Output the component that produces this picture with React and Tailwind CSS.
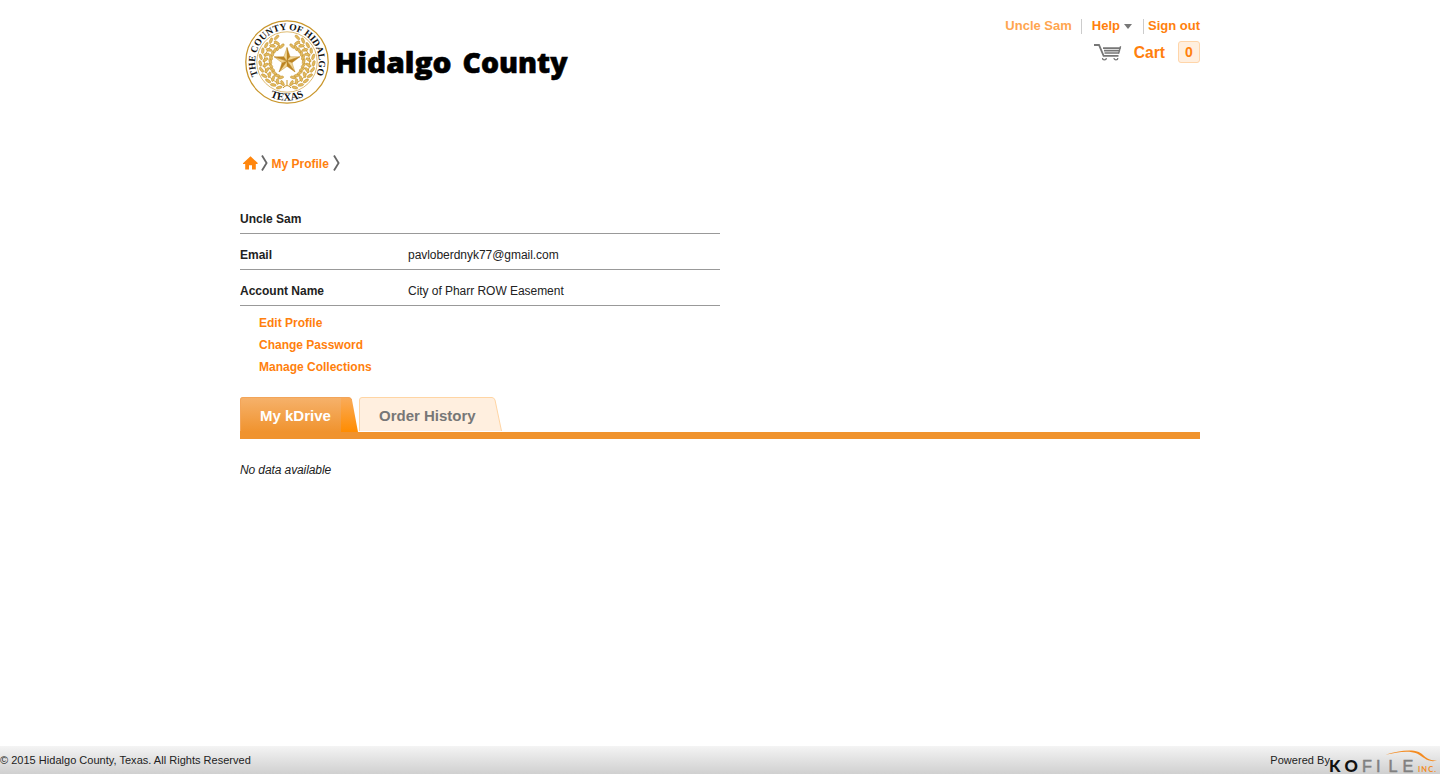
import React from "react";

const leaves = [];
for (let i = 0; i < 11; i++) {
  const a = 102 + i * 14;
  [[23, 50], [28, -30], [18, -34]].forEach(([r, tilt], j) => {
    leaves.push({ a: a + j * 5, r, tilt: tilt + (i % 3) * 9 });
    leaves.push({ a: 180 - a - j * 5, r, tilt: -tilt - (i % 3) * 9 });
  });
}

function star(cx, cy, R, r) {
  const pts = [];
  for (let i = 0; i < 10; i++) {
    const q = i % 2 ? r : R;
    const t = (-90 + i * 36) * (Math.PI / 180);
    pts.push([cx + q * Math.cos(t), cy + q * Math.sin(t)]);
  }
  return pts;
}

function Seal() {
  const pts = star(42, 41, 13.5, 5.3);
  return (
    <svg width="86" height="86" viewBox="-1 -1 86 86" className="shrink-0 overflow-visible">
      <defs>
        <path id="top" d="M 13.1 55.4 A 31.9 31.9 0 1 1 70.9 55.4" />
        <path id="bottom" d="M 14 68.5 A 38.6 38.6 0 0 0 70 68.5" />
      </defs>
      <circle cx="42" cy="42" r="41.2" fill="#fff" stroke="#c9962b" strokeWidth="1.3" />
      <circle cx="42" cy="42" r="30.2" fill="none" stroke="#d6aa4e" strokeWidth="0.8" />
      <g fill="none" stroke="#d0a03a" strokeWidth="1">
        <path d="M38 64.5 A 22.5 22.5 0 0 1 30 23 M46 64.5 A 22.5 22.5 0 0 0 54 23" />
      </g>
      <g fill="#e2bb62" stroke="#c08a20" strokeWidth="0.5">
        {leaves.map((l, i) => {
          const t = (l.a * Math.PI) / 180;
          return (
            <ellipse
              key={i}
              rx="3"
              ry="1.3"
              transform={`translate(${42 + (l.r - 1.3) * Math.cos(t)} ${42 + (l.r - 1.3) * Math.sin(t)}) rotate(${l.a + 90 + l.tilt})`}
            />
          );
        })}
      </g>
      <path d="M38 68 Q42 63 46 68 M42 65 V60" fill="none" stroke="#c9962b" />
      {pts.map((p, i) => {
        const n = pts[(i + 1) % 10];
        return (
          <polygon
            key={i}
            points={`42,41 ${p[0]},${p[1]} ${n[0]},${n[1]}`}
            fill={i % 2 ? "#f3d795" : "#bd8420"}
            stroke="#b98324"
            strokeWidth="0.4"
          />
        );
      })}
      <g fontFamily="Liberation Serif, serif" fontWeight="bold" fill="#111">
        <text fontSize="9.6">
          <textPath href="#top" textLength="127">THE COUNTY OF HIDALGO</textPath>
        </text>
        <text fontSize="10.5" textAnchor="middle">
          <textPath href="#bottom" startOffset="50%">TEXAS</textPath>
        </text>
      </g>
    </svg>
  );
}

function Chevron() {
  return (
    <svg width="7" height="16" viewBox="0 0 7 16" fill="none" stroke="#666" strokeWidth="1.8">
      <path d="M1 .5 L5.6 8 L1 15.5" />
    </svg>
  );
}

function CartIcon() {
  return (
    <svg width="28" height="18" viewBox="0 0 28 18" fill="none" stroke="#777">
      <path d="M0 2 H5 L9.6 12.8 H24.5" strokeWidth="1.8" />
      <path d="M9 5.2 H26.5 M10 7.6 H25.5 M10.5 10 H25" strokeWidth="1.7" />
      <path d="M26.6 3.2 L24.6 10.5" strokeWidth="1.4" />
      <path d="M8.5 14.9 a1.9 1.9 0 0 0 3.8 0 M20 14.9 a1.9 1.9 0 0 0 3.8 0" strokeWidth="1.2" />
    </svg>
  );
}

function Header() {
  return (
    <header className="flex h-[154px] justify-between pt-[19px]">
      <div className="flex h-[86px] items-start pl-1">
        <Seal />
        <svg width="240" height="50" viewBox="0 0 240 50" className="mt-[20px] ml-[3px] overflow-visible">
          <g fontFamily="Open Sans, sans-serif" fontSize="29" fontWeight="800" fill="#000" stroke="#000" strokeWidth="0.6">
            <text x="1.5" y="33.5" textLength="117" lengthAdjust="spacingAndGlyphs">Hidalgo</text>
            <text x="129.5" y="33.5" textLength="105" lengthAdjust="spacingAndGlyphs">County</text>
          </g>
        </svg>
      </div>
      <div className="flex flex-col items-end text-[13px] font-bold text-[#ff800d]">
        <div className="flex h-[14px] items-center leading-[14px]">
          <span className="text-[#ffa54f]">Uncle Sam</span>
          <span className="ml-[9px] h-[15px] w-px bg-[#ccc]" />
          <span className="ml-[10px]">Help</span>
          <svg width="8" height="5" viewBox="0 0 8 5" className="ml-1"><path d="M0 0H8L4 5Z" fill="#777" /></svg>
          <span className="ml-[11px] h-[15px] w-px bg-[#ccc]" />
          <span className="ml-1">Sign out</span>
        </div>
        <div className="mt-2 flex h-[22px] items-center text-[15.6px]">
          <CartIcon />
          <span className="ml-3 pt-[2px]">Cart</span>
          <span className="ml-[13px] flex h-[22px] w-[22px] items-center justify-center rounded-[3px] border border-[#ffd5a9] bg-[#ffefdf] text-[14px]">0</span>
        </div>
      </div>
    </header>
  );
}

function Row({ label, value }) {
  return (
    <div className="flex h-9 items-center border-b border-[#999] pt-[6px]">
      <span className="w-[168px] font-bold">{label}</span>
      <span className="tracking-[-0.04px]">{value}</span>
    </div>
  );
}

function Tabs() {
  return (
    <div className="mt-[19px] flex h-[42px] items-start border-b-[7px] border-[#f0932e]">
      <div className="relative h-[35px] w-[118px]">
        <svg width="118" height="35" viewBox="0 0 118 35" className="absolute inset-0">
          <defs>
            <linearGradient id="tab" x1="0" y1="0" x2="0" y2="1">
              <stop offset="0" stopColor="#f6b26c" />
              <stop offset="1" stopColor="#f0932e" />
            </linearGradient>
            <linearGradient id="cap" x1="0" y1="0" x2="0" y2="1">
              <stop offset="0" stopColor="#f9ac5c" />
              <stop offset="1" stopColor="#ff8c00" />
            </linearGradient>
          </defs>
          <path d="M0 35V3Q0 0 3 0H101V35Z" fill="url(#tab)" />
          <path d="M101 0H108Q111 0 112 3L118 35H101Z" fill="url(#cap)" />
          <path d="M.5 34V3Q.5 .5 3 .5H108Q111 .5 111.7 3" fill="none" stroke="#f3a559" />
        </svg>
        <span className="relative block pl-5 text-[15px] leading-[37px] font-bold text-white">My kDrive</span>
      </div>
      <div className="relative ml-px h-[35px] w-[144px]">
        <svg width="144" height="35" viewBox="0 0 144 35" className="absolute inset-0">
          <path d="M.5 34V3Q.5 .5 3 .5H133Q135 .5 136 3L142.5 34" fill="#ffefdf" stroke="#ffd5a4" />
        </svg>
        <span className="relative block pl-5 text-[15px] leading-[37px] font-bold text-[#777]">Order History</span>
      </div>
    </div>
  );
}

function KofileLogo() {
  return (
    <svg width="110" height="28" viewBox="0 0 110 28" className="shrink-0 overflow-visible">
      <g fontFamily="Lato, sans-serif" fontSize="16.5" fontWeight="900" fill="#111">
        <text x="-1" y="26">K</text>
        <text x="14.5" y="26">O</text>
      </g>
      <g fontFamily="Liberation Sans, sans-serif" fontSize="16.3" fill="#808080" stroke="#808080" strokeWidth="0.5">
        <text x="32" y="26">F</text>
        <text x="46" y="26">I</text>
        <text x="58.5" y="26">L</text>
        <text x="72.5" y="26">E</text>
      </g>
      <text x="88" y="26" fontFamily="Lato, sans-serif" fontSize="7.5" fontWeight="700" textLength="18" fill="#f48b20">INC.</text>
      <path d="M55.5 8.8 C66 5.5 80 3 88 5.8 C95 8.5 95 14.5 107 14.6 C97 17 94 11 87 7.6 C79 4 67 6 55.5 8.8Z" fill="#f48b20" />
    </svg>
  );
}

export default function App() {
  return (
    <div className="flex h-[774px] flex-col bg-white font-['Liberation_Sans',Arial,sans-serif] text-[12px] leading-[14px] text-[#222]">
      <main className="mx-auto w-[960px] flex-1">
        <Header />
        <nav className="flex h-[18px] items-center pl-[3px] font-bold text-[#ff800d]">
          <svg width="15" height="14" viewBox="0 0 15 14" fill="#ff860d">
            <path d="M7.5 .3 L15 7.3 L14 8 H12.8 V13.5 H9 V9.3 H6 V13.5 H2.2 V8 H0 V7.3Z" />
          </svg>
          <span className="ml-[3px]"><Chevron /></span>
          <span className="mr-1 ml-[3.5px] mt-px">My Profile</span>
          <Chevron />
        </nav>
        <section className="mt-[26px] w-[480px]">
          <Row label="Uncle Sam" />
          <Row label="Email" value="pavloberdnyk77@gmail.com" />
          <Row label="Account Name" value="City of Pharr ROW Easement" />
        </section>
        <div className="mt-[6px] flex flex-col pl-[19px] leading-[22px] font-bold text-[#ff800d]">
          <span>Edit Profile</span>
          <span>Change Password</span>
          <span>Manage Collections</span>
        </div>
        <Tabs />
        <p className="mt-6 tracking-[-0.1px] italic">No data available</p>
      </main>
      <footer className="flex h-[28px] items-center justify-between bg-linear-to-b from-[#f4f4f4] to-[#d0d0d0] text-[11px]">
        <span className="tracking-[0.02px]">© 2015 Hidalgo County, Texas. All Rights Reserved</span>
        <span className="flex items-center tracking-[0.04px]">Powered By<KofileLogo /></span>
      </footer>
    </div>
  );
}
